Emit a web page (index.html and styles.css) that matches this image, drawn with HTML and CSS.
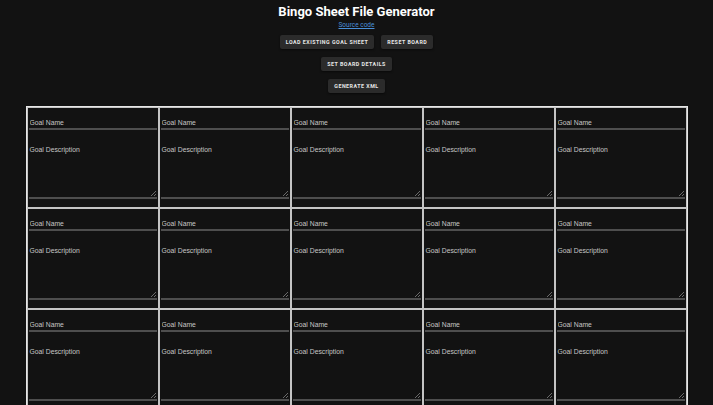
FILE: index.html
```html
<!DOCTYPE html>
<html>
<head>
<meta charset="utf-8">
<link rel="stylesheet" href="styles.css">
</head>
<body>
<header class="header">
  <h1 class="title">Bingo Sheet File Generator</h1>
  <a class="source" href="#">Source code</a>
</header>
<div class="actions">
  <div class="btn-row">
    <button class="btn">Load existing goal sheet</button>
    <button class="btn">Reset board</button>
  </div>
  <div class="btn-row">
    <button class="btn">Set board details</button>
  </div>
  <div class="btn-row">
    <button class="btn">Generate XML</button>
  </div>
</div>
<div class="board" id="board"></div>
<script src="app.js"></script>
</body>
</html>
```
FILE: app.js
```js
const board = document.getElementById('board');
for (let i = 0; i < 25; i++) {
  const cell = document.createElement('div');
  cell.className = 'cell';
  cell.innerHTML = '<input class="goal-name" type="text" placeholder="Goal Name"><div class="desc-wrap"><textarea class="goal-desc" placeholder="Goal Description"></textarea></div>';
  board.appendChild(cell);
}
```
FILE: styles.css
```css
html, body {
  margin: 0;
  padding: 0;
  background: #121212;
  color: #fff;
  font-family: Roboto, "Liberation Sans", sans-serif;
}
.header {
  display: flex;
  flex-direction: column;
  align-items: center;
  padding-top: 3px;
}
.title {
  margin: 0;
  font-size: 13px;
  line-height: 18px;
  font-weight: 700;
}
.source {
  font-size: 6.5px;
  line-height: 8px;
  color: #4a8fd8;
  text-decoration: underline;
}
.actions {
  display: flex;
  flex-direction: column;
  align-items: center;
  gap: 8px;
  margin-top: 6px;
}
.btn-row {
  display: flex;
  gap: 7px;
  justify-content: center;
}
.btn {
  background: #2b2b2b;
  color: #e8e8e8;
  border: none;
  border-radius: 2px;
  height: 14px;
  padding: 0 6px;
  font-family: Roboto, "Liberation Sans", sans-serif;
  font-size: 5.3px;
  font-weight: 700;
  letter-spacing: 0.5px;
  text-transform: uppercase;
  box-shadow: 0 1px 2px rgba(0,0,0,0.5);
}
.board {
  width: 660px;
  margin: 13px auto 0;
  border: 1px solid #e6e6e6;
  display: grid;
  grid-template-columns: repeat(5, 132px);
}
.cell {
  box-sizing: border-box;
  height: 101px;
  border: 1px solid #c4c4c4;
  padding: 8px 1px 0 1px;
  display: flex;
  flex-direction: column;
  opacity: 0.999;
}
.goal-name, .goal-desc {
  display: block;
  width: 100%;
  box-sizing: border-box;
  background: transparent;
  border: none;
  border-bottom: 2px solid #4e4e4e;
  color: #ddd;
  font-family: "Liberation Sans", Arial, sans-serif;
  font-size: 6.8px;
  padding: 0 0 0 1px;
  margin: 0;
  outline: none;
}
.goal-name {
  height: 14px;
  line-height: 12px;
}
.desc-wrap {
  position: relative;
  margin-top: 14px;
}
.desc-wrap::after {
  content: "";
  position: absolute;
  right: 1px;
  bottom: 3px;
  width: 5px;
  height: 5px;
  background: linear-gradient(135deg, transparent 45%, #6a6a6a 45%, #6a6a6a 55%, transparent 55%, transparent 72%, #6a6a6a 72%, #6a6a6a 82%, transparent 82%);
  pointer-events: none;
}
.goal-desc {
  height: 55px;
  padding-top: 1px;
  line-height: 10px;
  resize: none;
}
.goal-name::placeholder, .goal-desc::placeholder {
  color: #c6c6c6;
  opacity: 1;
}
```
